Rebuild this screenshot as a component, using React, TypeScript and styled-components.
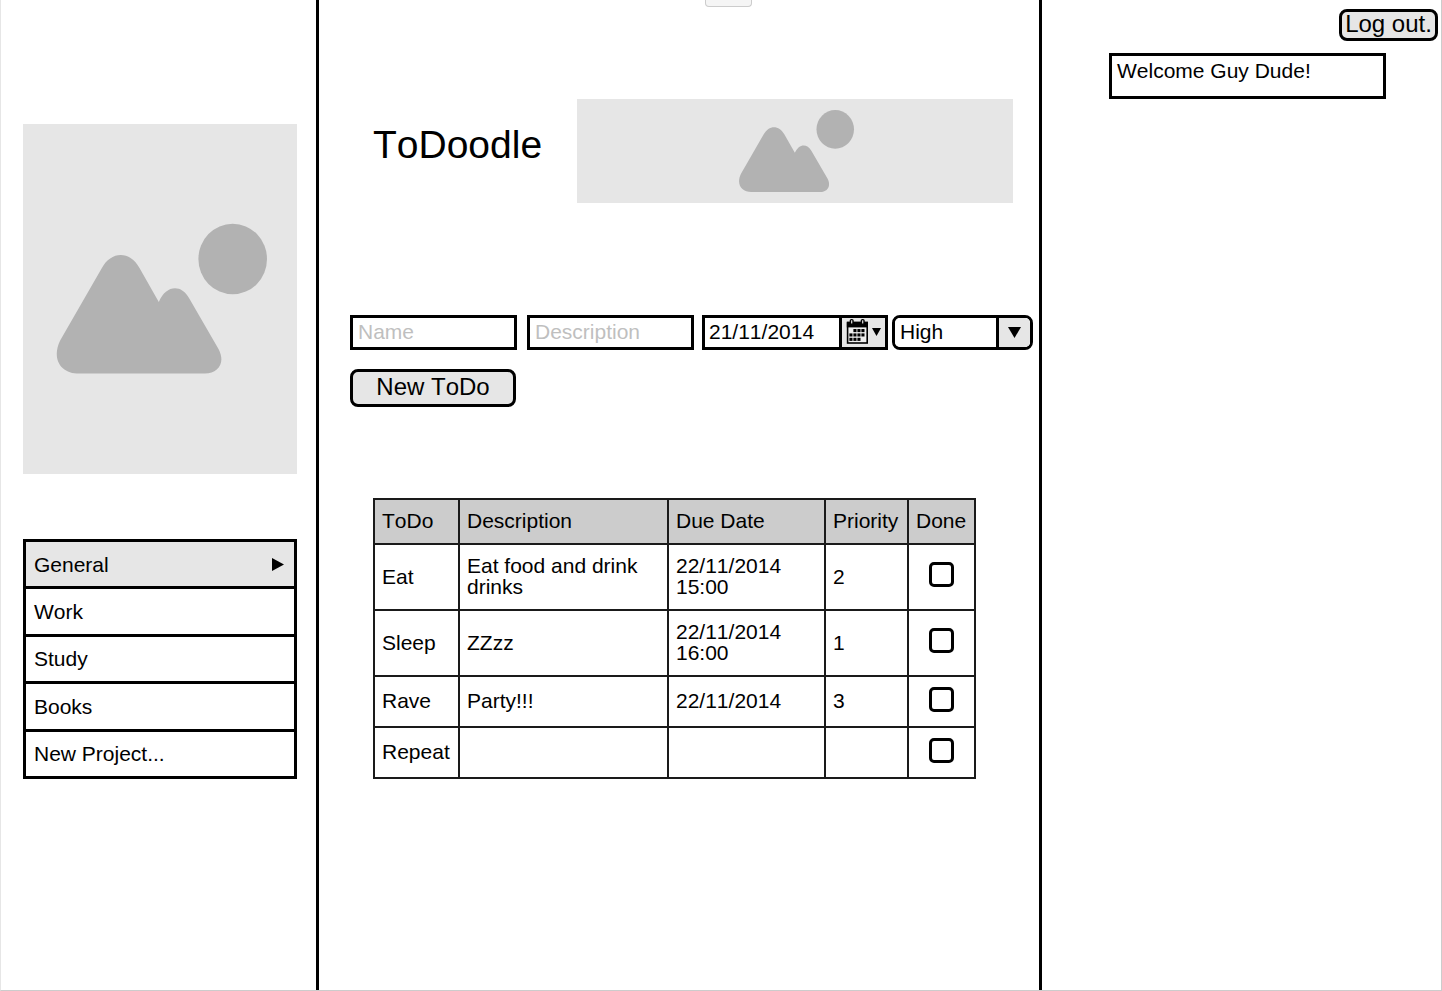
import React, { useState } from "react";
import styled, { createGlobalStyle } from "styled-components";

const GlobalStyle = createGlobalStyle`
  *, *::before, *::after { box-sizing: border-box; }
  body {
    margin: 0;
    background: #fff;
    color: #000;
    font-family: "Liberation Sans", Arial, sans-serif;
    font-size: 21px;
    line-height: 21px;
    font-kerning: none;
  }
  button, input, select { font: inherit; color: inherit; margin: 0; }
`;

const Page = styled.div`
  position: relative;
  display: grid;
  grid-template-columns: minmax(240px, 318fr) minmax(723px, 723fr) minmax(300px, 399fr);
  min-height: 100vh;
  border: 1px solid #ccc;
  border-top: 0;
  border-left-color: #e6e6e6;
`;

const TopTab = styled.div`
  position: absolute;
  top: 0;
  left: 50%;
  width: 47px;
  height: 7px;
  margin-left: -16px;
  background: #f5f5f5;
  border: 1px solid #ccc;
  border-top: 0;
  border-radius: 0 0 4px 4px;
`;

const Sidebar = styled.aside`
  padding: 124px 19px 0 22px;
  border-right: 3px solid #000;
`;

const Main = styled.main`
  padding-top: 99px;
  border-right: 3px solid #000;
`;

const Account = styled.aside`
  display: flex;
  flex-direction: column;
  padding: 9px 3px 0;
`;

const Placeholder = styled.div<{ $height: number }>`
  display: flex;
  flex: 1;
  align-items: center;
  justify-content: center;
  height: ${(p) => p.$height}px;
  background: #e6e6e6;
`;

const ProjectList = styled.ul`
  display: grid;
  grid-auto-rows: 1fr;
  min-height: 240px;
  margin: 65px 0 0;
  padding: 0;
  list-style: none;
  border: 3px solid #000;
  border-top: 0;
`;

const ProjectItem = styled.li`
  display: flex;
  border-top: 3px solid #000;
`;

const ProjectLink = styled.a<{ $active?: boolean }>`
  display: flex;
  flex: 1;
  align-items: center;
  justify-content: space-between;
  padding: 0 10px 0 8px;
  color: inherit;
  text-decoration: none;
  background: ${(p) => (p.$active ? "#e6e6e6" : "#fff")};
`;

const Header = styled.header`
  display: flex;
  align-items: flex-start;
  padding: 0 26px 0 54px;
`;

const Title = styled.h1`
  flex: 0 0 204px;
  margin: 0;
  font-size: 39px;
  font-weight: 400;
  line-height: 92px;
`;

const TodoForm = styled.form`
  display: flex;
  flex-direction: column;
  align-items: flex-start;
  gap: 19px;
  margin-top: 112px;
  padding-left: 31px;
`;

const FieldRow = styled.div`
  display: flex;
  gap: 8px;
`;

const FieldGroup = styled.div<{ $gap: number }>`
  display: flex;
  gap: ${(p) => p.$gap}px;
`;

const TextField = styled.input`
  width: 167px;
  height: 35px;
  padding: 0 5px 2px;
  border: 3px solid #000;
  border-radius: 0;
  background: #fff;
  &::placeholder { color: #bfbfbf; opacity: 1; }
`;

const DateField = styled.div`
  display: flex;
  width: 186px;
  height: 35px;
  border: 3px solid #000;
`;

const DateInput = styled.input`
  flex: 1;
  min-width: 0;
  padding: 0 4px 2px;
  border: 0;
  background: #fff;
`;

const CalendarButton = styled.button`
  display: flex;
  flex: 0 0 46px;
  align-items: center;
  gap: 4px;
  padding: 0 0 2px 4px;
  border: 0;
  border-left: 3px solid #000;
  background: #e6e6e6;
`;

const SelectField = styled.div`
  display: grid;
  grid-template-columns: 1fr 34px;
  width: 141px;
  height: 35px;
  overflow: hidden;
  border: 3px solid #000;
  border-radius: 8px;
`;

const Select = styled.select`
  grid-area: 1 / 1 / 2 / 3;
  appearance: none;
  padding: 0 5px 2px;
  border: 0;
  background: #fff;
  line-height: 27px;
`;

const SelectArrow = styled.span`
  grid-area: 1 / 2 / 2 / 3;
  z-index: 1;
  display: flex;
  align-items: center;
  justify-content: center;
  border-left: 3px solid #000;
  background: #e6e6e6;
  pointer-events: none;
`;

const Button = styled.button<{ $width: number; $height: number }>`
  width: ${(p) => p.$width}px;
  height: ${(p) => p.$height}px;
  padding: 0 0 3px;
  border: 3px solid #000;
  border-radius: 8px;
  background: #e6e6e6;
  font-size: 24px;
  line-height: 24px;
  white-space: nowrap;
`;

const LogOut = styled(Button)`
  align-self: flex-end;
`;

const TodoTable = styled.table`
  margin: 91px 0 0 54px;
  border-collapse: collapse;
  table-layout: fixed;
  width: 603px;
`;

const HeadCell = styled.th`
  height: 45px;
  padding: 0 7px 2px;
  border: 2px solid #1a1a1a;
  background: #ccc;
  font-weight: 400;
  text-align: left;
  white-space: nowrap;
`;

const Cell = styled.td`
  padding: 0 7px 2px;
  border: 2px solid #1a1a1a;
`;

const TodoRow = styled.tr<{ $tall?: boolean }>`
  height: ${(p) => (p.$tall ? 66 : 51)}px;
`;

const DoneCell = styled(Cell)`
  padding-bottom: 5px;
  text-align: center;
`;

const Checkbox = styled.input`
  appearance: none;
  display: block;
  width: 25px;
  height: 25px;
  margin: 0 auto;
  border: 3px solid #000;
  border-radius: 5px;
  background: #fff;
  &:checked { background: #000; box-shadow: inset 0 0 0 3px #fff; }
`;

const Welcome = styled.p`
  min-height: 46px;
  margin: 12px 52px 0 64px;
  padding: 4px 5px;
  border: 3px solid #000;
`;

const Drawing = styled.svg`
  flex: none;
  overflow: visible;
`;

const Mountains = ({ width, height }: { width: number; height: number }) => (
  <Drawing width={width} height={height} viewBox="-3 1 214 151" fill="#b2b2b2" aria-hidden="true">
    <ellipse cx="176.7" cy="36" rx="34.3" ry="35.3" />
    <path d="M23.3 150.6C5 150.6-5 136 4.3 117.3L45.6 45.5C55 27.5 74 27.5 83.5 45L102.8 79C110 62 125 61 133 75L162.5 126C170 140 162 150.6 149 150.6Z" />
  </Drawing>
);

const Triangle = ({ width, height, points }: { width: number; height: number; points: string }) => (
  <Drawing width={width} height={height} viewBox={`0 0 ${width} ${height}`} aria-hidden="true">
    <polygon points={points} />
  </Drawing>
);

const calendarDots: [number, number][] = [
  [7.4, 10], [11.4, 10], [15.4, 10],
  [3.4, 14.4], [7.4, 14.4], [11.4, 14.4], [15.4, 14.4],
  [3.4, 18.8], [7.4, 18.8], [11.4, 18.8],
];

const CalendarIcon = () => (
  <Drawing width="22" height="25" viewBox="0 0 22 25" aria-hidden="true">
    <rect x="1.6" y="4" width="19.6" height="20" fill="#eee" stroke="#000" strokeWidth="1.6" />
    <rect x="0.8" y="2.6" width="21.2" height="5.8" />
    <rect x="4.4" y="0.6" width="2.6" height="4.6" rx="1" fill="#e6e6e6" stroke="#000" strokeWidth="1.4" />
    <rect x="15.4" y="0.6" width="2.6" height="4.6" rx="1" fill="#e6e6e6" stroke="#000" strokeWidth="1.4" />
    {calendarDots.map(([x, y]) => (
      <rect key={`${x}-${y}`} x={x} y={y} width="3.1" height="3.1" />
    ))}
  </Drawing>
);

const projects = ["General", "Work", "Study", "Books", "New Project..."];
const columns: [string, number][] = [
  ["ToDo", 85], ["Description", 209], ["Due Date", 157], ["Priority", 83], ["Done", 67],
];
const todos = [
  { name: "Eat", description: "Eat food and drink drinks", due: "22/11/2014 15:00", priority: "2", tall: true },
  { name: "Sleep", description: "ZZzz", due: "22/11/2014 16:00", priority: "1", tall: true },
  { name: "Rave", description: "Party!!!", due: "22/11/2014", priority: "3" },
  { name: "Repeat", description: "", due: "", priority: "" },
];

export default function App() {
  const [active, setActive] = useState("General");
  const [date, setDate] = useState("21/11/2014");

  return (
    <>
      <GlobalStyle />
      <Page>
        <TopTab />
        <Sidebar>
          <Placeholder $height={350}>
            <Mountains width={214} height={151} />
          </Placeholder>
          <nav aria-label="Projects">
            <ProjectList>
              {projects.map((name) => (
                <ProjectItem key={name}>
                  <ProjectLink href="#" $active={name === active} onClick={() => setActive(name)}>
                    {name}
                    {name === active && <Triangle width={12} height={13} points="0,0 12,6.5 0,13" />}
                  </ProjectLink>
                </ProjectItem>
              ))}
            </ProjectList>
          </nav>
        </Sidebar>

        <Main>
          <Header>
            <Title>ToDoodle</Title>
            <Placeholder $height={104}>
              <Mountains width={117} height={83} />
            </Placeholder>
          </Header>

          <TodoForm onSubmit={(e) => e.preventDefault()}>
            <FieldRow>
              <FieldGroup $gap={10}>
                <TextField aria-label="Name" placeholder="Name" />
                <TextField aria-label="Description" placeholder="Description" />
              </FieldGroup>
              <FieldGroup $gap={4}>
                <DateField>
                  <DateInput aria-label="Due date" value={date} onChange={(e) => setDate(e.target.value)} />
                  <CalendarButton type="button" aria-label="Choose a date">
                    <CalendarIcon />
                    <Triangle width={9} height={8} points="0,0 9,0 4.5,8" />
                  </CalendarButton>
                </DateField>
                <SelectField>
                  <Select aria-label="Priority" defaultValue="High">
                    <option>High</option>
                    <option>Medium</option>
                    <option>Low</option>
                  </Select>
                  <SelectArrow>
                    <Triangle width={13} height={11} points="0,0 13,0 6.5,11" />
                  </SelectArrow>
                </SelectField>
              </FieldGroup>
            </FieldRow>
            <Button type="submit" $width={166} $height={38}>New ToDo</Button>
          </TodoForm>

          <TodoTable>
            <colgroup>
              {columns.map(([label, width]) => (
                <col key={label} width={width} />
              ))}
            </colgroup>
            <thead>
              <tr>
                {columns.map(([label]) => (
                  <HeadCell key={label} scope="col">{label}</HeadCell>
                ))}
              </tr>
            </thead>
            <tbody>
              {todos.map((todo) => (
                <TodoRow key={todo.name} $tall={todo.tall}>
                  <Cell>{todo.name}</Cell>
                  <Cell>{todo.description}</Cell>
                  <Cell>{todo.due}</Cell>
                  <Cell>{todo.priority}</Cell>
                  <DoneCell>
                    <Checkbox type="checkbox" aria-label={`${todo.name} done`} />
                  </DoneCell>
                </TodoRow>
              ))}
            </tbody>
          </TodoTable>
        </Main>

        <Account>
          <LogOut type="button" $width={99} $height={32}>Log out.</LogOut>
          <Welcome>Welcome Guy Dude!</Welcome>
        </Account>
      </Page>
    </>
  );
}
